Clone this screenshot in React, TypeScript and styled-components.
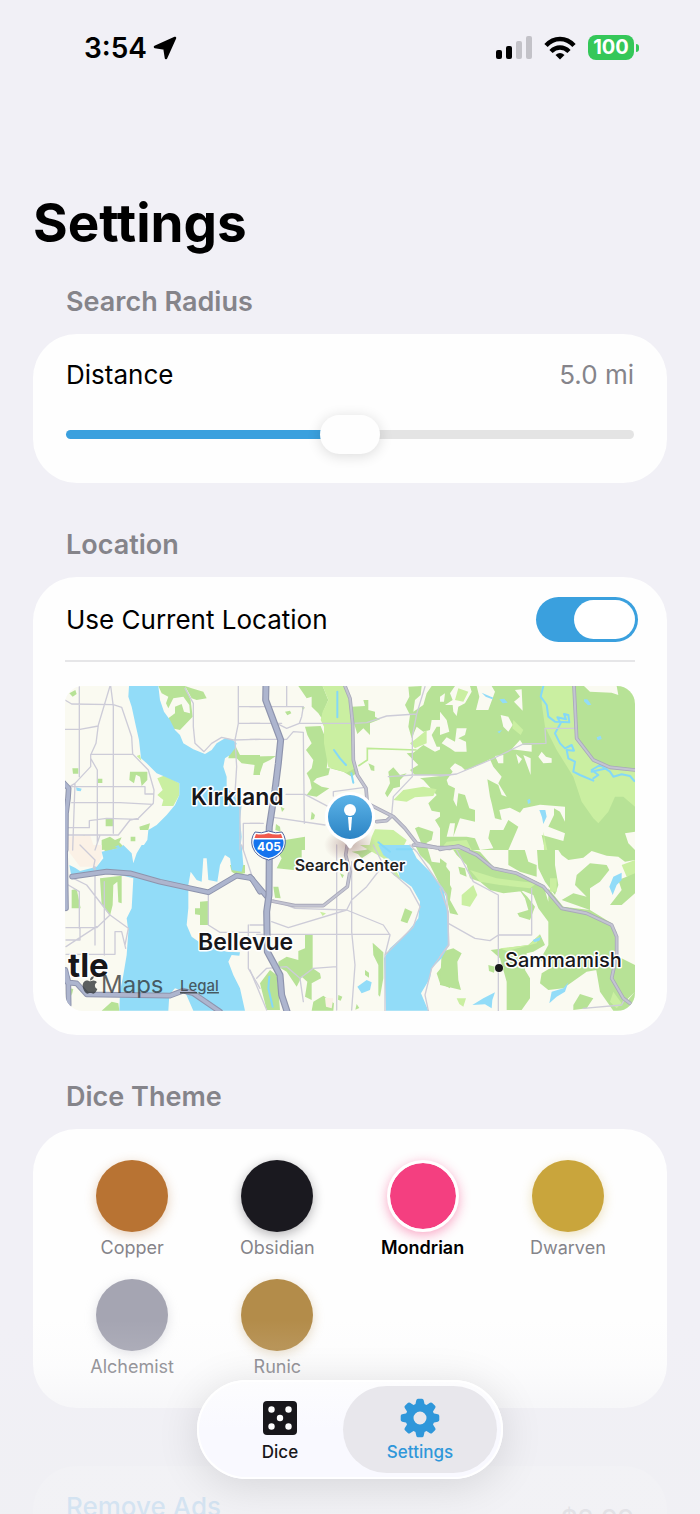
import React, { useState } from "react";
import styled, { createGlobalStyle } from "styled-components";
import { FaApple } from "react-icons/fa";

const blue = "#3aa0de";

const GlobalStyle = createGlobalStyle`
  * { box-sizing: border-box; }
  body {
    margin: 0;
    background: #f1f0f6;
    color: #000;
    font-family: Inter, "Liberation Sans", sans-serif;
    -webkit-font-smoothing: antialiased;
  }
`;

const Screen = styled.div`
  position: relative;
  height: 100vh;
  overflow: hidden;
`;

const Scroll = styled.div`
  height: 100%;
  overflow-y: auto;
  scrollbar-width: none;
`;

const StatusBar = styled.header`
  display: flex;
  align-items: center;
  justify-content: space-between;
  height: 95px;
  padding: 0 61px 0 84px;
`;

const StatusGroup = styled.div<{ $gap: number }>`
  display: flex;
  align-items: center;
  gap: ${(p) => p.$gap}px;
`;

const Clock = styled.span`
  font-size: 28px;
  line-height: 32px;
  font-weight: 600;
`;

const Battery = styled.div`
  display: flex;
  align-items: center;
  gap: 2px;
  &::after {
    content: "";
    width: 3px;
    height: 8px;
    border-radius: 0 4px 4px 0;
    background: #35c759;
  }
`;

const BatteryLevel = styled.span`
  width: 46px;
  height: 25px;
  border-radius: 8px;
  background: #35c759;
  color: #fff;
  font-size: 20px;
  line-height: 25px;
  font-weight: 700;
  text-align: center;
`;

const Main = styled.main`
  padding: 95px 33px 120px;
`;

const Title = styled.h1`
  margin: 0 0 30px;
  font-size: 53px;
  line-height: 66px;
  font-weight: 700;
`;

const Section = styled.section<{ $gap?: number }>`
  margin-bottom: ${(p) => p.$gap ?? 46}px;
`;

const SectionTitle = styled.h2`
  margin: 0 0 16px;
  padding-left: 33px;
  color: #85848a;
  font-size: 27px;
  line-height: 32px;
  font-weight: 600;
`;

const Card = styled.div<{ $pad: string }>`
  padding: ${(p) => p.$pad};
  border-radius: 44px;
  background: #fefefe;
`;

const Row = styled.div`
  display: flex;
  align-items: center;
  justify-content: space-between;
  font-size: 26px;
  line-height: 34px;
`;

const ToggleRow = styled(Row)`
  height: 83px;
  padding: 2px 29px 0 33px;
`;

const Value = styled.output`
  color: #85848a;
`;

const Slider = styled.input<{ $fill: number }>`
  display: block;
  width: 100%;
  height: 39px;
  margin: 23px 0 0;
  appearance: none;
  background: transparent;
  &::-webkit-slider-runnable-track {
    height: 9px;
    border-radius: 5px;
    background: linear-gradient(to right, ${blue} ${(p) => p.$fill}%, #e4e4e4 ${(p) => p.$fill}%);
  }
  &::-webkit-slider-thumb {
    appearance: none;
    width: 60px;
    height: 39px;
    margin-top: -15px;
    border-radius: 20px;
    background: #fefefe;
    box-shadow: 0 2px 14px rgba(0, 0, 0, 0.14);
  }
`;

const Switch = styled.input`
  flex: none;
  display: flex;
  width: 102px;
  height: 45px;
  margin: 0;
  padding: 3px;
  appearance: none;
  border-radius: 23px;
  background: #e4e4e4;
  &::before {
    content: "";
    width: 61px;
    height: 39px;
    border-radius: 20px;
    background: #fff;
  }
  &:checked {
    justify-content: flex-end;
    background: ${blue};
  }
`;

const MapFrame = styled.div`
  margin: 0 32px;
  padding-top: 24px;
  border-top: 2px solid #e6e6e8;
  > svg {
    display: block;
    width: 100%;
    border-radius: 18px;
  }
`;

const ThemeGrid = styled.div`
  display: grid;
  grid-template-columns: repeat(4, 1fr);
  gap: 19px 13px;
`;

const ThemeOption = styled.label`
  display: flex;
  flex-direction: column;
  align-items: center;
  gap: 4px;
  color: #85848a;
  font-size: 18px;
  line-height: 24px;
  &:has(:checked) {
    color: #000;
    font-weight: 600;
  }
`;

const Swatch = styled.input<{ $color: string }>`
  width: 72px;
  height: 72px;
  margin: 0;
  appearance: none;
  border-radius: 50%;
  background: ${(p) => p.$color};
  background-clip: padding-box;
  box-shadow: 0 3px 12px ${(p) => p.$color}55;
  &:checked {
    border: 3px solid #fff;
    box-shadow: 0 3px 12px ${(p) => p.$color}77;
  }
`;

const PurchaseButton = styled.button`
  display: flex;
  justify-content: space-between;
  width: 100%;
  padding: 0;
  border: 0;
  background: none;
  color: #1a8fe0;
  font: inherit;
  font-size: 26px;
  line-height: 34px;
  font-weight: 500;
`;

const Price = styled.span`
  padding-top: 12px;
  color: #85848a;
`;

const BottomFade = styled.div`
  position: absolute;
  inset: auto 0 0;
  height: 194px;
  pointer-events: none;
  background: linear-gradient(
    to bottom,
    rgba(240, 240, 244, 0) 0,
    rgba(240, 240, 244, 0.15) 46px,
    rgba(240, 240, 244, 0.5) 84px,
    rgba(240, 240, 244, 0.86) 144px,
    rgba(240, 240, 244, 0.87) 100%
  );
`;

const TabBar = styled.nav`
  position: absolute;
  bottom: 35px;
  left: 50%;
  transform: translateX(-50%);
  display: flex;
  width: 306px;
  padding: 6px;
  border-radius: 50px;
  background: linear-gradient(#fdfdfe, #f9f9ff 50%);
  box-shadow: 0 6px 44px rgba(0, 0, 0, 0.12), inset 0 0 0 2px #fff;
`;

const Tab = styled.button<{ $active?: boolean }>`
  display: flex;
  flex: ${(p) => (p.$active ? "0 0 154px" : "1")};
  flex-direction: column;
  align-items: center;
  height: 87px;
  padding: ${(p) => (p.$active ? "12px 0 0" : "12px 0 0 14px")};
  gap: 4px;
  border: 0;
  border-radius: 44px;
  background: ${(p) => (p.$active ? "#e8e7ec" : "transparent")};
  color: ${(p) => (p.$active ? "#2f97da" : "#18171b")};
  font: inherit;
  font-size: 17px;
  line-height: 20px;
  font-weight: 500;
`;

/* Each map tile is drawn on its own 600 x 510 grid, three units to the pixel. */
type Tile = "A" | "B" | "C" | "D" | "E" | "F";
const origin: Record<Tile, [number, number]> = {
  A: [-15, -18],
  B: [555, -18],
  C: [1125, -18],
  D: [-15, 477],
  E: [555, 477],
  F: [1125, 477],
};

type Shapes = Partial<Record<Tile, string>>;

const Layer = ({ shapes, ...rest }: { shapes: Shapes } & React.SVGProps<SVGGElement>) => (
  <g fill="none" strokeLinejoin="round" strokeLinecap="round" {...rest}>
    {(Object.keys(shapes) as Tile[]).map((t) => (
      <path key={t} d={shapes[t]} transform={`translate(${origin[t][0]} ${origin[t][1]})`} />
    ))}
  </g>
);

const woods: Shapes = {
  A: "M295,18L375,18 392,60 398,110 360,150 335,145 325,115 345,100 345,80 365,72 372,95 390,100 388,75 370,50 340,55 325,85 318,70 325,50 305,40zM375,18L395,25 430,35 440,55 410,60 395,55zM28,40l18,-10 4,12 -12,8zM210,275L262,275 262,300 245,318 240,290 228,284 222,310 208,300zM525,195L540,225 600,225 600,285 585,285 585,255 545,250 530,235 505,235 508,222zM37,265h18v16h-16zM113,296h14v13h-14zM137,417h22v22h-22zM238,440L270,430 265,450 240,450zM125,480L150,470 165,480 185,472 178,487 195,505 125,510zM212,470h14v14h-14zM62,470l12,-5 2,20 -8,8z",
  B: "M145,18L218,18 235,60 220,95 215,115 205,100 185,80 185,50 170,55zM165,140L212,138 225,170 225,190 237,215 230,265 320,262 325,275 305,290 280,275 240,265 235,285 215,290 200,295 190,305 215,320 238,325 200,350 170,345 185,325 180,300 170,280 185,265 190,240 168,210 185,190 172,165zM306,80L345,78 340,60 355,60 355,90 375,95 375,110 390,118 360,130 360,165 340,145 322,162 312,130zM475,20L515,18 512,45 495,60 490,95 520,75 530,40 545,18 600,18 600,75 575,95 595,120 545,120 540,150 520,155 500,140 485,175 475,140 480,105 465,75 478,50zM560,140H600V200L560,200 545,165zM470,220L490,218 520,195 555,215 600,195 600,290 540,285 495,285 480,270 505,255zM415,275L430,262 450,285 470,280 450,300 450,320 430,325 412,352 405,340 420,310zM510,295L600,285 600,430 570,445 555,420 585,400 545,392 535,370 560,345 520,300zM505,440L550,455 545,480 530,488 530,510 520,510 510,480 495,445zM0,230L78,228 60,240 40,250 28,285 10,285 15,245zM78,432L90,440 92,455 76,450zM105,480L165,470 165,510 90,510zM105,95l15,-3 4,8 -12,6zM92,380l12,6 -8,10zM185,395l10,10 -3,12 -10,2zM155,78l10,5 -8,8zM355,250l18,8 0,15 -10,-2z",
  C: "M0,18H585V510H0z",
  D: "M120,100L185,92 185,175 175,172 172,110 160,120 158,180 150,212 125,180zM35,135L50,132 62,190 35,190zM510,60L555,60 555,85 530,90 515,80zM405,190L420,190 420,170 445,168 445,240 420,240 420,210 405,208zM130,0L180,0 165,12 135,22zM450,450l10,0 0,30 -10,-5zM125,497L155,470 175,475 178,497zM30,430l10,2 -5,20z",
  E: "M70,0L155,0 155,60 130,75 80,70 95,40zM305,20L345,15 375,5 365,20 335,40 325,28zM495,0L530,0 545,50 580,55 600,80 600,150 570,120 540,60 510,30zM70,125L85,125 92,160 75,158zM465,190L487,200 472,235 452,228zM165,268L188,268 188,370 210,385 213,400 185,415 185,465 165,455 172,410 155,395 140,425 110,380 85,365 85,350 110,335 145,345 145,318 165,310zM30,415L60,375 80,390 85,430 90,495 50,495zM368,293L400,322 400,400 390,455 385,450 385,360 370,330zM190,470L220,452 252,475 250,497 185,497zM560,385L580,360 600,340 600,430 570,415zM345,375l12,8 0,15 -12,-8zM265,450l12,5 -5,12 -8,-3zM320,477l8,12 -12,5zM270,85l12,5 -5,10z",
  F: "M30,0L120,20 160,65 230,80 310,120 325,170 325,230 295,190 280,150 250,138 190,145 150,135 120,110 90,100 80,60 50,30zM205,0L250,0 265,50 290,60 290,95 240,80 205,60zM290,0H345L345,60 355,120 345,150 315,110 295,70zM345,0H585V45L555,50 535,35 500,32 455,18 430,38 385,45 365,30zM365,165L400,145 440,155 405,120 410,90 450,55 500,60 508,75 480,110 450,130 450,195zM510,180L545,135 535,105 560,95 585,75V145L545,180zM0,40L20,55 15,90 35,130 30,165 55,210 30,205 20,160 0,110zM55,65l20,5 5,25 -20,-8zM325,130L370,185 450,195 515,235 530,262 525,330 585,360V440L550,475 500,400 470,375 440,380 370,430 325,435 300,415 305,385 330,370 300,345 325,300 325,240zM232,205L265,195 255,160 235,130 262,155 285,185 270,225 238,215zM152,315L265,300 300,268 315,300 280,320 260,325 255,375 270,400 270,460 245,495 200,495 200,410 180,340zM5,320L40,310 65,325 52,350 55,405 63,435 0,420zM467,365L520,355 560,470 585,440V497H520L480,440zM400,480L420,447 460,460 440,490 400,495zM145,360l20,5 -3,18 -15,-5z",
};

const clearings: Shapes = {
  C: "M0,95L20,120 28,155 0,165zM0,50L15,40 12,65 0,65zM15,75L38,60 30,40 45,18 90,18 95,35 75,70 55,80 50,108 40,95 38,75zM110,18L155,18 165,35 145,90 108,90 118,50zM182,105L205,110 218,135 205,155 190,140zM222,65L240,50 225,30 245,28 248,92zM5,190L20,172 45,185 50,145 80,145 75,165 55,175 78,185 80,215 45,215 30,205zM215,208L240,180 250,195 275,195 275,215zM295,230L305,215 318,230 335,235 335,248 310,250zM165,228L190,225 190,250 175,250zM228,222l18,15 -10,15zM250,225L272,235 272,285zM20,300L38,275 30,265 45,250 65,260 75,270 95,265 150,238 160,260 185,290 175,310 200,350 185,345 175,315 142,298 150,350 155,370 165,415 185,420 178,390 210,383 240,398 250,385 300,374 375,380 375,425 360,395 342,385 342,405 325,440 375,460 370,483 325,470 305,465 315,510 205,510 235,440 205,420 190,450 150,450 145,475 160,505 120,510 105,475 80,470 20,470 30,430 45,430 40,470 60,415 105,425 105,390 88,385 75,345 55,340 50,380 40,360 45,325 25,315zM432,18L530,18 535,45 515,38 450,35zM555,460L585,455V510L565,490z",
};

const meadow: Shapes = {
  A: "M292,295L315,286 358,310 358,345 340,378 305,378 310,360 292,345 308,330zM230,228l10,-4 4,18z",
  B: "M218,18L285,18 302,80 308,130 310,240 320,262 290,278 235,262 222,190 222,140 212,120 218,95 235,60zM430,360L460,330 520,320 560,328 550,348 495,352 470,365zM480,190L500,175 530,150 530,190 495,205zM375,448L430,450 470,480 460,500 500,510 355,510 365,470z",
  C: "M305,18L400,18 408,175 460,240 510,262 585,270 585,380 550,350 525,350 505,395 475,430 460,415 425,365 400,290 350,210 315,140 305,70zM45,60L55,25 85,35 70,65zM220,120l30,30 -8,15 -25,-20zM310,455l12,55 -10,0zM0,510L20,485 80,480 95,510z",
  E: "M330,0H390L455,105 430,90 400,40zM210,200l18,5 -10,8z",
  F: "M90,75L170,100 290,115 270,130 180,120 120,110zM545,60L585,45V85L560,95zM330,100h20v40h-20zM180,310L265,300 300,270 290,295 200,318zM50,460h28l-8,25 -12,-8zM65,150L100,120 112,150 90,185 65,180zM510,470L520,440 545,475 530,490z",
};

const peach: Shapes = {
  A: "M20,470L90,465 105,510H20z",
  D: "M20,0L125,0 125,35 110,65 60,65 30,25z",
  E: "M225,458L250,460 245,490 228,485z",
};

const water: Shapes = {
  A: "M207,18L295,18 300,60 312,95 330,120 345,150 360,165 370,190 400,208 435,222 455,210 470,190 495,175 515,178 530,190 525,205 510,225 495,235 490,260 500,290 500,320 545,375 540,420 545,470 540,512L240,512 262,480 265,450 290,435 320,405 345,375 358,345 358,310 315,290 290,280 260,250 243,235 237,180 228,140 215,80 205,50zM48,322L65,326 62,334 50,332zM165,500l10,-5 12,15z",
  C: "M125,38l35,15 -3,5 -20,-8zM178,58l15,-2 10,12 -15,2zM432,58l10,0 12,16 -10,2 -12,-12zM470,172l12,-5 3,10 -12,4zM172,155l14,-5 -8,10zM262,360l8,-4 2,12 -8,4zM298,390h18l4,20 -10,22 -4,-20z",
  D: "M190,0L215,25 220,55 230,25 245,0L545,0 550,60 545,80 515,75 510,40 495,30 480,60 472,110 445,105 440,40 430,40 425,110 410,105 392,80 385,120 385,190 380,240 395,275 430,300 500,320 540,322 538,332 515,330 505,350 520,390 540,430 555,497L400,497 375,440 345,430 328,450 325,497L178,497 180,440 190,390 200,330 205,260 200,220 215,190 220,100 140,80 35,100 28,60 45,68 60,78 110,65 130,40 125,20 180,8z",
  E: "M385,0L480,0 500,40 540,80 580,130 597,220 597,300 575,340 545,370 540,400 513,445 535,497 408,497 402,340 420,310 470,265 505,220 510,170 485,125 450,100 440,60 400,30zM322,425L350,405 365,412 360,435 335,445z",
  F: "M0,120L15,160 25,240 25,300 0,335zM508,125L520,95 545,83 545,105 530,120 518,150zM278,285l25,-10 -5,12 -15,5zM97,480L130,460 165,442 157,465 155,490 135,478zM328,475L335,440 370,430 385,412 375,440 350,455z",
};

const streams: Shapes = {
  B: "M262,35V112M252,210L270,235 288,255M304,280l6,28M385,487l35,28M440,508h45",
  C: "M310,18L302,50 320,75 325,110 345,125 388,127 385,105 372,102 378,118 352,112 362,130 345,160 360,190 375,205 395,195 402,212 380,210 385,235 405,245 400,275 420,285 460,302M460,295L475,285 455,270 480,255 510,275 520,290 545,283 570,288 583,303M455,275L500,265",
  E: "M58,395L55,430 68,485",
};

const lanes: Shapes = {
  A: "M15,60L35,72 160,74 185,82 215,170 218,222 265,270 282,330 280,370 235,415 210,420 175,465 120,465 105,510M150,18L115,135 108,190 92,225 92,260 45,310 20,325M58,18V290M152,18L160,80V460M15,148H60L115,138M92,223H218M92,235L112,270V490M15,320H255V342H280M35,368H180L278,373M20,443H88V422L140,415 235,418M20,465H120M45,310L38,510M375,25L400,70 400,140 405,190 432,215 455,190 485,172 520,180 600,178M535,18V130L525,180 530,260 525,340 540,385 540,510M535,80h65M535,130h65M550,510V430H600",
  B: "M110,18V80M0,80H160L155,110 148,130 110,145 80,130M0,130H95M0,178H110L130,155 160,157 163,430M148,130H310L350,128 410,108 500,102 525,20M500,102L487,170 487,290 430,350 425,405M415,290L490,285 600,285M108,343H165L245,385M70,412L225,435M250,348V335L345,322M0,430H40",
  C: "M0,288L50,282 150,240 250,192 318,190 315,145H405",
  D: "M40,100L80,120 150,210 205,250 195,300M25,120L58,140V250M105,65V300M18,248H110L150,210M18,285H60V250M18,305L110,245M133,110V330M18,328H165V260H185L197,310M445,140V240L480,262H600M565,240V370L600,430M545,0L575,90M60,0L105,45 100,70",
  E: "M70,165L135,190 290,195 400,240 420,270 405,330M65,230L115,248 290,195 305,165 350,125 400,60 480,130 510,185 490,245 405,330V497M0,240H45M20,268H420M260,0V495M305,50V260L315,360 305,495M0,375L50,495M20,400L50,370 110,365 150,400 160,470M150,400L190,370 260,365M370,0L400,60M480,0L500,20 590,150 597,300 545,370 525,450 535,497",
  F: "M50,15L100,110 175,150V497M25,235L105,280 150,287 175,270H275V130M430,490L545,480 555,460M0,130L25,200V300L0,335",
};

const mainRoads: Shapes = {
  B: "M285,18L300,55 308,130 310,240 322,285 348,325 352,370 430,410 465,445 500,490 560,503 600,505M380,425L410,422 425,408",
  C: "M402,18L410,175 460,240 510,262 585,270M0,508L55,498 85,510",
  E: "M65,168L135,182 220,182 292,125 300,80 287,30 292,0M490,0L560,8 600,8",
  F: "M0,10L55,5 110,30 160,70 230,85 310,125 365,190 440,205 515,240 530,275 530,330 515,400 550,460 570,475",
};

const freeways: Shapes = {
  A: "M12,310L26,325 24,355 18,400 17,510",
  D: "M36,95L140,80 210,85 300,110 445,142 530,92 575,100 600,140M12,385L22,412 50,415 80,448 330,452 370,437 400,445 480,500M15,0L18,190M16,375L25,410 26,480",
  E: "M0,95L55,160",
};

const interstate: Shapes = {
  B: "M48,10L47,60 92,180 85,250 75,330 58,440 55,512",
  E: "M58,0L57,150 50,200 52,320 90,390 95,450 112,502",
};

const AreaMap = () => (
  <svg viewBox="0 0 570 325" role="img" aria-label="Map of the search area" preserveAspectRatio="xMidYMid slice">
    <defs>
      <linearGradient id="pin" x1="0" y1="0" x2="0" y2="1">
        <stop offset="0" stopColor="#5db4e8" />
        <stop offset="1" stopColor="#2b83c4" />
      </linearGradient>
      <radialGradient id="pinShade">
        <stop offset="0" stopColor="#7c4a4a" stopOpacity="0.4" />
        <stop offset="1" stopColor="#7c4a4a" stopOpacity="0" />
      </radialGradient>
    </defs>
    <rect width="570" height="325" fill="#fafaf1" />
    <g transform="scale(0.33333)">
      <Layer shapes={woods} fill="#b7e296" />
      <Layer shapes={clearings} fill="#fafaf1" />
      <Layer shapes={meadow} fill="#caefa1" />
      <Layer shapes={peach} fill="#fbf1e6" />
      <Layer shapes={water} fill="#92dcf8" />
      <Layer shapes={streams} stroke="#84d8f8" strokeWidth="6" />
      <path d="M880,240L907,222V187L1055,192" fill="none" stroke="#bdea95" strokeWidth="5" />
      <Layer shapes={lanes} stroke="#cdccd8" strokeWidth="4" />
      <Layer shapes={mainRoads} stroke="#a9a9b9" strokeWidth="11" />
      <Layer shapes={mainRoads} stroke="#c3c4d2" strokeWidth="6" />
      <Layer shapes={freeways} stroke="#8e94ad" strokeWidth="17" />
      <Layer shapes={freeways} stroke="#adb5ce" strokeWidth="11" />
      <Layer shapes={interstate} stroke="#8e94ad" strokeWidth="21" />
      <Layer shapes={interstate} stroke="#adb5ce" strokeWidth="14" />
    </g>

    <g transform="translate(187 145)">
      <path
        d="M3,1Q9,3 16.500,0Q24,3 30,1Q35,8 32.500,16Q29,26 16.500,29Q4,26 .5,16Q-2,8 3,1z"
        fill="#fff"
        stroke="#53679f"
        strokeWidth="1"
      />
      <path d="M4,3Q10,4.500 16.500,2.200Q23,4.500 29,3L30.500,7H2.500z" fill="#f0594c" />
      <path d="M2,8.500H31Q32.500,13 30,18Q26,25 16.500,27Q7,25 3,18Q.5,13 2,8.500z" fill="#1473ee" />
      <text x="17" y="20" fontSize="12" fontWeight="700" fill="#fff" textAnchor="middle">405</text>
    </g>

    <g fill="#17171a" stroke="#fff" strokeWidth="3" strokeLinejoin="round" paintOrder="stroke" fontWeight="600">
      <text x="126" y="119" fontSize="23">Kirkland</text>
      <text x="133" y="264" fontSize="23">Bellevue</text>
      <text x="3" y="291" fontSize="33" fontWeight="700">tle</text>
      <text x="440" y="281" fontSize="20" fontWeight="500">Sammamish</text>
      <circle cx="434" cy="282" r="4" strokeWidth="1" />
    </g>

    <ellipse cx="285" cy="159" rx="26" ry="17" fill="url(#pinShade)" />
    <path d="M285,106a25,25 0 0 1 10,48q-6,3 -8,7q-2,3 -4,0q-2,-4 -8,-7a25,25 0 0 1 10,-48z" fill="#fff" />
    <circle cx="285" cy="131" r="22" fill="url(#pin)" />
    <circle cx="285" cy="124" r="6" fill="#fff" />
    <path d="M283,131h4l-1,13q-1,1 -2,0z" fill="#fff" />
    <text
      x="285"
      y="185"
      fontSize="16"
      fontWeight="600"
      textAnchor="middle"
      fill="#222"
      stroke="#fff"
      strokeWidth="3"
      strokeLinejoin="round"
      paintOrder="stroke"
    >
      Search Center
    </text>

    <g fill="#33383b" fillOpacity="0.8">
      <FaApple x={15} y={289} size={20} color="#33383b" />
      <text x="36" y="307" fontSize="24">Maps</text>
      <a href="#legal">
        <text x="115" y="305" fontSize="15" fontWeight="500" textDecoration="underline">Legal</text>
      </a>
    </g>
  </svg>
);

const LocationArrow = () => (
  <svg width="24" height="24" viewBox="0 0 24 24" aria-hidden="true">
    <path d="M22,2L2,11L11.500,12.500L13,22z" stroke="#000" strokeWidth="2.500" strokeLinejoin="round" />
  </svg>
);

const SignalIcon = () => (
  <svg width="36" height="23" viewBox="0 0 36 23" aria-hidden="true">
    <rect x="0" y="14" width="6" height="9" rx="2" />
    <rect x="10" y="10" width="6" height="13" rx="2" />
    <rect x="20" y="5" width="6" height="18" rx="2" fill="#c3c2c8" />
    <rect x="30" y="0" width="6" height="23" rx="2" fill="#c3c2c8" />
  </svg>
);

const WifiIcon = () => (
  <svg width="32" height="24" viewBox="0 0 32 24" aria-hidden="true">
    <g fill="none" stroke="#000" strokeWidth="4.500">
      <path d="M2,9.500Q8,3 16,3T30,9.500" />
      <path d="M7,15.500Q11,11.500 16,11.500T25,15.500" />
    </g>
    <path d="M11.500,19Q16,15 20.500,19L16,23.500z" />
  </svg>
);

const DiceIcon = () => (
  <svg width="40" height="40" viewBox="0 0 40 40" aria-hidden="true">
    <rect x="3" y="3" width="34" height="34" rx="4" fill="currentColor" />
    <g fill="#fff">
      <circle cx="11.500" cy="11.500" r="3.200" />
      <circle cx="28.500" cy="11.500" r="3.200" />
      <circle cx="20" cy="20" r="3.200" />
      <circle cx="11.500" cy="28.500" r="3.200" />
      <circle cx="28.500" cy="28.500" r="3.200" />
    </g>
  </svg>
);

const GearIcon = () => (
  <svg width="40" height="40" viewBox="0 0 40 40" fill="currentColor" aria-hidden="true">
    <path
      fillRule="evenodd"
      d="M20,5.500a14.500,14.500 0 1 0 0,29a14.500,14.500 0 1 0 0,-29zM20,13.500a6.500,6.500 0 1 1 0,13a6.500,6.500 0 1 1 0,-13z"
    />
    {[0, 45, 90, 135, 180, 225, 270, 315].map((angle) => (
      <path
        key={angle}
        transform={`rotate(${angle} 20 20)`}
        d="M15,8L16.300,2.200Q16.600,.7 18,.7H22Q23.400,.7 23.700,2.200L25,8z"
      />
    ))}
  </svg>
);

const themes = [
  { name: "Copper", color: "#b87333" },
  { name: "Obsidian", color: "#1a191f" },
  { name: "Mondrian", color: "#f43f80" },
  { name: "Dwarven", color: "#c9a53c" },
  { name: "Alchemist", color: "#a5a5b2" },
  { name: "Runic", color: "#b38c4a" },
];

export default function App() {
  const [radius, setRadius] = useState(5);
  const [useCurrent, setUseCurrent] = useState(true);
  const [theme, setTheme] = useState("Mondrian");

  return (
    <Screen>
      <GlobalStyle />
      <Scroll>
        <StatusBar>
          <StatusGroup $gap={6}>
            <Clock>3:54</Clock>
            <LocationArrow />
          </StatusGroup>
          <StatusGroup $gap={12}>
            <SignalIcon />
            <WifiIcon />
            <Battery>
              <BatteryLevel>100</BatteryLevel>
            </Battery>
          </StatusGroup>
        </StatusBar>
        <Main>
          <Title>Settings</Title>

          <Section>
            <SectionTitle>Search Radius</SectionTitle>
            <Card $pad="24px 33px 29px">
              <Row>
                <label htmlFor="distance">Distance</label>
                <Value htmlFor="distance">{radius.toFixed(1)} mi</Value>
              </Row>
              <Slider
                id="distance"
                type="range"
                min={0}
                max={10}
                step={0.5}
                value={radius}
                $fill={radius * 10}
                onChange={(e) => setRadius(Number(e.target.value))}
              />
            </Card>
          </Section>

          <Section>
            <SectionTitle>Location</SectionTitle>
            <Card $pad="0 0 24px">
              <ToggleRow>
                <label htmlFor="current">Use Current Location</label>
                <Switch
                  id="current"
                  type="checkbox"
                  checked={useCurrent}
                  onChange={(e) => setUseCurrent(e.target.checked)}
                />
              </ToggleRow>
              <MapFrame>
                <AreaMap />
              </MapFrame>
            </Card>
          </Section>

          <Section $gap={58}>
            <SectionTitle>Dice Theme</SectionTitle>
            <Card $pad="31px 33px 29px">
              <ThemeGrid>
                {themes.map((t) => (
                  <ThemeOption key={t.name}>
                    <Swatch
                      type="radio"
                      name="theme"
                      $color={t.color}
                      checked={theme === t.name}
                      onChange={() => setTheme(t.name)}
                    />
                    {t.name}
                  </ThemeOption>
                ))}
              </ThemeGrid>
            </Card>
          </Section>

          <Card $pad="24px 33px">
            <PurchaseButton type="button">
              Remove Ads <Price>$2.99</Price>
            </PurchaseButton>
          </Card>
        </Main>
      </Scroll>
      <BottomFade />
      <TabBar>
        <Tab type="button">
          <DiceIcon />
          Dice
        </Tab>
        <Tab type="button" $active>
          <GearIcon />
          Settings
        </Tab>
      </TabBar>
    </Screen>
  );
}
